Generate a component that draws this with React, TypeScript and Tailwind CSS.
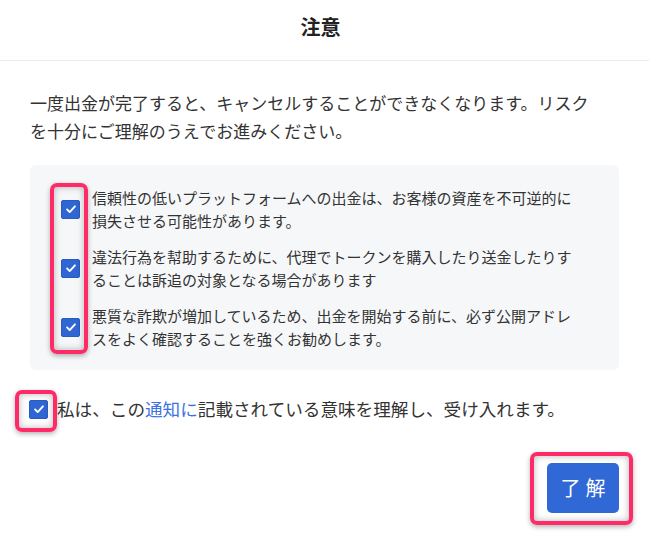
import { useState } from 'react';

const risks = [
  '信頼性の低いプラットフォームへの出金は、お客様の資産を不可逆的に損失させる可能性があります。',
  '違法行為を幇助するために、代理でトークンを購入したり送金したりすることは訴追の対象となる場合があります',
  '悪質な詐欺が増加しているため、出金を開始する前に、必ず公開アドレスをよく確認することを強くお勧めします。',
];

function CheckBox({ checked, onToggle }: { checked: boolean; onToggle: () => void }) {
  return (
    <button
      onClick={onToggle}
      className={`w-[19px] h-[19px] shrink-0 rounded-[2px] border flex items-center justify-center ${
        checked ? 'bg-[#2f66d4] border-[#2a5cc0]' : 'bg-white border-[#b9bec7]'
      }`}
    >
      {checked && (
        <svg width="14" height="14" viewBox="0 0 16 16" fill="none">
          <path d="M3.5 8.5l3 3 6-6.5" stroke="#fff" strokeWidth="2.2" strokeLinecap="round" strokeLinejoin="round" />
        </svg>
      )}
    </button>
  );
}

// pink callout frame drawn over a control
function Highlight({ className }: { className: string }) {
  return (
    <div
      className={`absolute pointer-events-none border-4 border-[#ff2b68] rounded-[7px] shadow-[0_2px_5px_rgba(0,0,0,0.3),inset_0_0_7px_rgba(0,0,0,0.28)] ${className}`}
    />
  );
}

export default function App() {
  const [checks, setChecks] = useState([true, true, true]);
  const [agreed, setAgreed] = useState(true);

  const toggle = (i: number) => setChecks((c) => c.map((v, j) => (j === i ? !v : v)));

  return (
    <div
      className="w-[649px] h-[543px] bg-white text-[#333] overflow-hidden"
      style={{ fontFamily: '"Noto Sans CJK JP", "Noto Sans", sans-serif' }}
    >
      {/* Header */}
      <div className="h-[61px] flex items-center justify-center border-b border-[#ebebeb]">
        <h2 className="text-[20px] font-bold text-[#222] leading-none -mt-[6px] -ml-[8px]">注意</h2>
      </div>

      <div className="px-[30px] pt-[28px]">
        <p className="w-[575px] text-[17px] leading-[28px] text-[#333]">
          一度出金が完了すると、キャンセルすることができなくなります。リスクを十分にご理解のうえでお進みください。
        </p>

        {/* Risk list */}
        <div className="relative mt-[20px] bg-[#f6f7f9] rounded-md pt-[21px] pb-[20px] pl-[31px] flex flex-col gap-[13px]">
          {risks.map((text, i) => (
            <div key={i} className="flex items-center gap-[12px]">
              <CheckBox checked={checks[i]} onToggle={() => toggle(i)} />
              <span className="w-[488px] text-[15px] leading-[23px] text-[#333]">{text}</span>
            </div>
          ))}
          <Highlight className="left-[20px] top-[18px] w-[38px] h-[171px]" />
        </div>

        {/* Agreement */}
        <div className="relative mt-[25px] h-[28px] flex items-center gap-[9px] -ml-[1px]">
          <CheckBox checked={agreed} onToggle={() => setAgreed(!agreed)} />
          <span className="text-[17.6px] leading-[28px] text-[#333]">
            私は、この<span className="text-[#3b74e0]">通知に</span>記載されている意味を理解し、受け入れます。
          </span>
          <Highlight className="-left-[14px] -top-[5px] w-[42px] h-[42px]" />
        </div>

        {/* Confirm */}
        <div className="mt-[40px] flex justify-end">
          <div className="relative">
            <button className="w-[72px] h-[50px] bg-[#3068d5] rounded-[5px] text-white text-[20px] tracking-[5px] pl-[5px]">
              了解
            </button>
            <Highlight className="-left-[17px] -top-[11px] -right-[14px] -bottom-[12px]" />
          </div>
        </div>
      </div>
    </div>
  );
}
